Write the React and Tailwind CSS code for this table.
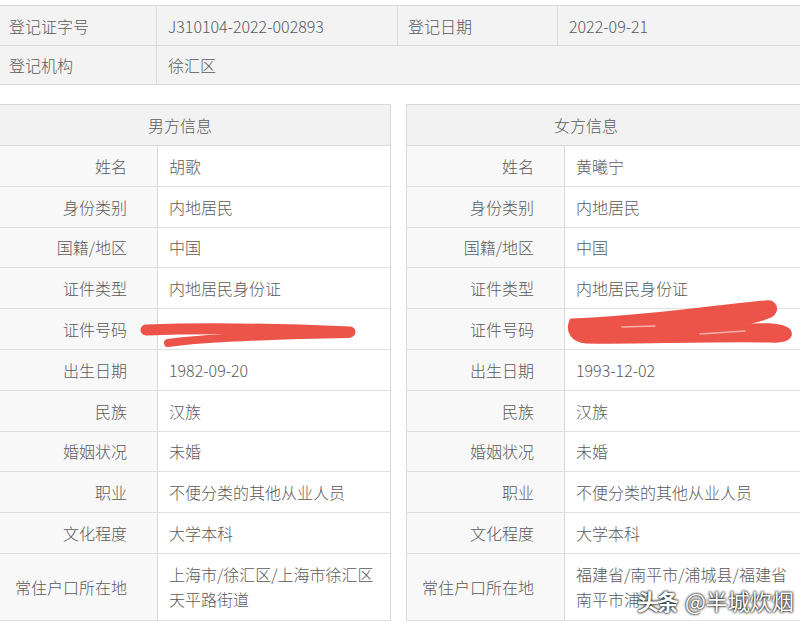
import React from "react";

const male = [
  ["姓名", "胡歌"],
  ["身份类别", "内地居民"],
  ["国籍/地区", "中国"],
  ["证件类型", "内地居民身份证"],
  ["证件号码", "\u00a0"],
  ["出生日期", "1982-09-20"],
  ["民族", "汉族"],
  ["婚姻状况", "未婚"],
  ["职业", "不便分类的其他从业人员"],
  ["文化程度", "大学本科"],
];

const female = [
  ["姓名", "黄曦宁"],
  ["身份类别", "内地居民"],
  ["国籍/地区", "中国"],
  ["证件类型", "内地居民身份证"],
  ["证件号码", "\u00a0"],
  ["出生日期", "1993-12-02"],
  ["民族", "汉族"],
  ["婚姻状况", "未婚"],
  ["职业", "不便分类的其他从业人员"],
  ["文化程度", "大学本科"],
];

const Panel = ({ title, rows, address, titlePad }) => (
  <div className="border-t border-r border-[#dadada] bg-white">
    <div
      className={`h-[41px] flex items-center justify-center bg-[#f2f2f2] border-b border-[#dadada] ${titlePad}`}
    >
      {title}
    </div>
    {rows.map(([label, value]) => (
      <div key={label} className="flex h-[40.8px] border-b border-[#e0e0e0]">
        <div className="w-[158px] shrink-0 flex items-center justify-end pr-[30px] bg-[#f8f8f8] border-r border-[#dadada]">
          {label}
        </div>
        <div className="flex-1 flex items-center pl-[11px] bg-white">{value}</div>
      </div>
    ))}
    <div className="flex h-[67px] border-b border-[#e0e0e0]">
      <div className="w-[158px] shrink-0 flex items-center justify-end pr-[30px] bg-[#f8f8f8] border-r border-[#dadada]">
        常住户口所在地
      </div>
      <div className="flex-1 flex flex-col justify-center pl-[11px] leading-[25px] bg-white">
        {address.map((line) => (
          <span key={line} className="whitespace-nowrap">
            {line}
          </span>
        ))}
      </div>
    </div>
  </div>
);

export default function App() {
  return (
    <div className="relative w-[800px] h-[628px] overflow-hidden bg-white text-[16px] font-light text-[#5a5a5a] font-['Noto_Sans_CJK_SC','Noto_Sans',sans-serif]">
      {/* top registration table */}
      <div className="pt-[5px] bg-white">
        <div className="border-t border-b border-[#dadada] bg-[#f3f3f3]">
          <div className="flex h-[40px] border-b border-[#dadada]">
            <div className="w-[157px] flex items-center pl-[9px] border-r border-[#dadada]">登记证字号</div>
            <div className="w-[241px] flex items-center pl-[11px] border-r border-[#dadada]">
              J310104-2022-002893
            </div>
            <div className="w-[160px] flex items-center pl-[10px] border-r border-[#dadada]">登记日期</div>
            <div className="flex-1 flex items-center pl-[11px]">2022-09-21</div>
          </div>
          <div className="flex h-[38px]">
            <div className="w-[157px] flex items-center pl-[9px] border-r border-[#dadada]">登记机构</div>
            <div className="flex-1 flex items-center pl-[11px]">徐汇区</div>
          </div>
        </div>
      </div>

      {/* party info panels */}
      <div className="flex gap-[15px] mt-[19px]">
        <div className="w-[391px] shrink-0">
          <Panel
            title="男方信息"
            rows={male}
            address={["上海市/徐汇区/上海市徐汇区", "天平路街道"]}
            titlePad="pr-[30px]"
          />
        </div>
        <div className="w-[420px] shrink-0 border-l border-[#dadada]">
          <Panel
            title="女方信息"
            rows={female}
            address={["福建省/南平市/浦城县/福建省", "南平市浦"]}
            titlePad="pr-[60px]"
          />
        </div>
      </div>

      {/* red redaction scribbles */}
      <svg className="absolute left-0 top-0 pointer-events-none" width="800" height="628">
        <g fill="#ec4a40" stroke="#ec4a40" strokeLinecap="round" strokeLinejoin="round" opacity="0.95">
          <path d="M146 330 C200 328 280 329 350 332" strokeWidth="11" fill="none" />
          <path d="M348 334 C300 335 220 336 168 343" strokeWidth="8" fill="none" />
          <path
            d="M571 320 C640 318 700 308 765 302 C776 300 779 311 771 316 C758 322 740 324 722 326 C752 325 780 322 789 330 C794 338 785 342 770 341 C700 340 640 343 586 342 C573 341 566 332 571 320 Z"
            strokeWidth="3"
          />
        </g>
        <g fill="none" stroke="#f6b0aa" strokeWidth="1.5" strokeLinecap="round">
          <path d="M622 327 L655 326" />
          <path d="M700 334 L745 331" />
        </g>
      </svg>

      {/* watermark */}
      <div className="absolute left-[637px] top-[589px] flex items-center gap-[8px] text-white text-[22px] font-normal leading-none [text-shadow:0_0_2px_#000,0_0_3px_#000]">
        <span className="font-bold tracking-[-2px]">头条</span>
        <span>@半城炊烟</span>
      </div>
    </div>
  );
}
